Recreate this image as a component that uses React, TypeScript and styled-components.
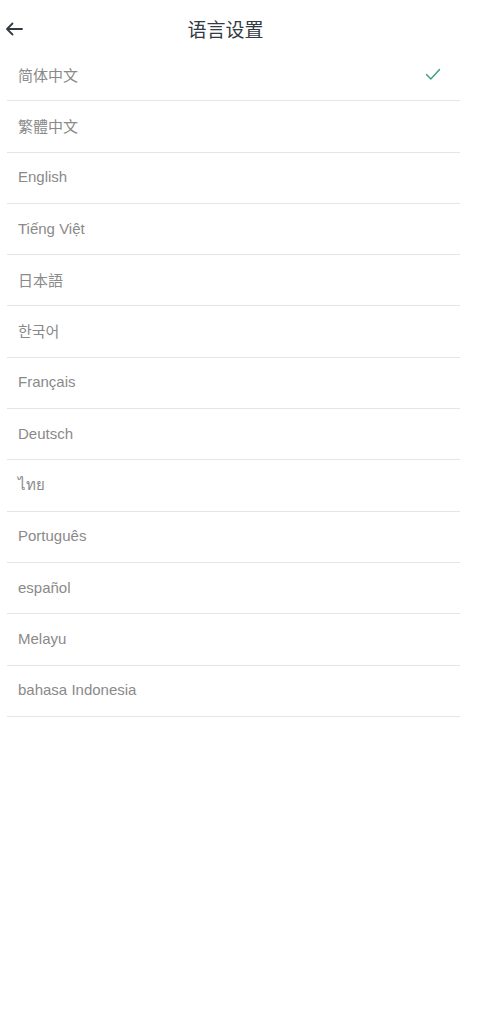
import styled, { createGlobalStyle } from 'styled-components';

const GlobalStyle = createGlobalStyle`
    body {
        margin: 0;
        background: #ffffff;
        font-family: "Liberation Sans", Arial, "Noto Sans CJK SC", sans-serif;
    }
`;

const Page = styled.div`
    width: 479px;
    min-height: 1024px;
    background: #ffffff;
`;

const Header = styled.header`
    height: 50px;
    display: flex;
    align-items: center;
    justify-content: center;
    position: relative;
`;

const BackButton = styled.button`
    position: absolute;
    left: 4px;
    top: 19px;
    width: 20px;
    height: 20px;
    padding: 0;
    border: none;
    background: none;
    display: flex;
    align-items: center;
    justify-content: center;
    cursor: pointer;
`;

const Title = styled.h1`
    margin: 0 0 0 -28px;
    padding-top: 6px;
    font-size: 19px;
    font-weight: normal;
    color: #333a44;
    font-family: "Noto Sans CJK SC", sans-serif;
`;

const List = styled.ul`
    list-style: none;
    margin: 0;
    padding: 0 19px 0 7px;
`;

const Row = styled.li`
    height: 51.3px;
    box-sizing: border-box;
    border-bottom: 1px solid #e3e5ec;
    display: flex;
    align-items: center;
    justify-content: space-between;
    padding: 0 19px 2px 11px;
    font-size: 15px;
    color: #8a8a8a;
    cursor: pointer;
`;

const languages = [
    '简体中文',
    '繁體中文',
    'English',
    'Tiếng Việt',
    '日本語',
    '한국어',
    'Français',
    'Deutsch',
    'ไทย',
    'Português',
    'español',
    'Melayu',
    'bahasa Indonesia',
];

function Check() {
    return (
        <svg width="16" height="13" viewBox="0 0 16 13" fill="none">
            <path d="M1.5 6.5 L5.8 11 L14.5 1.5" stroke="#3a9e82" strokeWidth="1.4" strokeLinecap="round" strokeLinejoin="round" />
        </svg>
    );
}

export default function App() {
    const selected = 0;

    return (
        <Page>
            <GlobalStyle />
            <Header>
                <BackButton aria-label="back">
                    <svg width="18" height="14" viewBox="0 0 18 14" fill="none">
                        <path d="M17 7 H2 M7.5 1.5 L2 7 L7.5 12.5" stroke="#333a44" strokeWidth="1.8" strokeLinecap="round" strokeLinejoin="round" />
                    </svg>
                </BackButton>
                <Title>语言设置</Title>
            </Header>
            <List>
                {languages.map((name, i) => (
                    <Row key={name}>
                        <span>{name}</span>
                        {i === selected && <Check />}
                    </Row>
                ))}
            </List>
        </Page>
    );
}
